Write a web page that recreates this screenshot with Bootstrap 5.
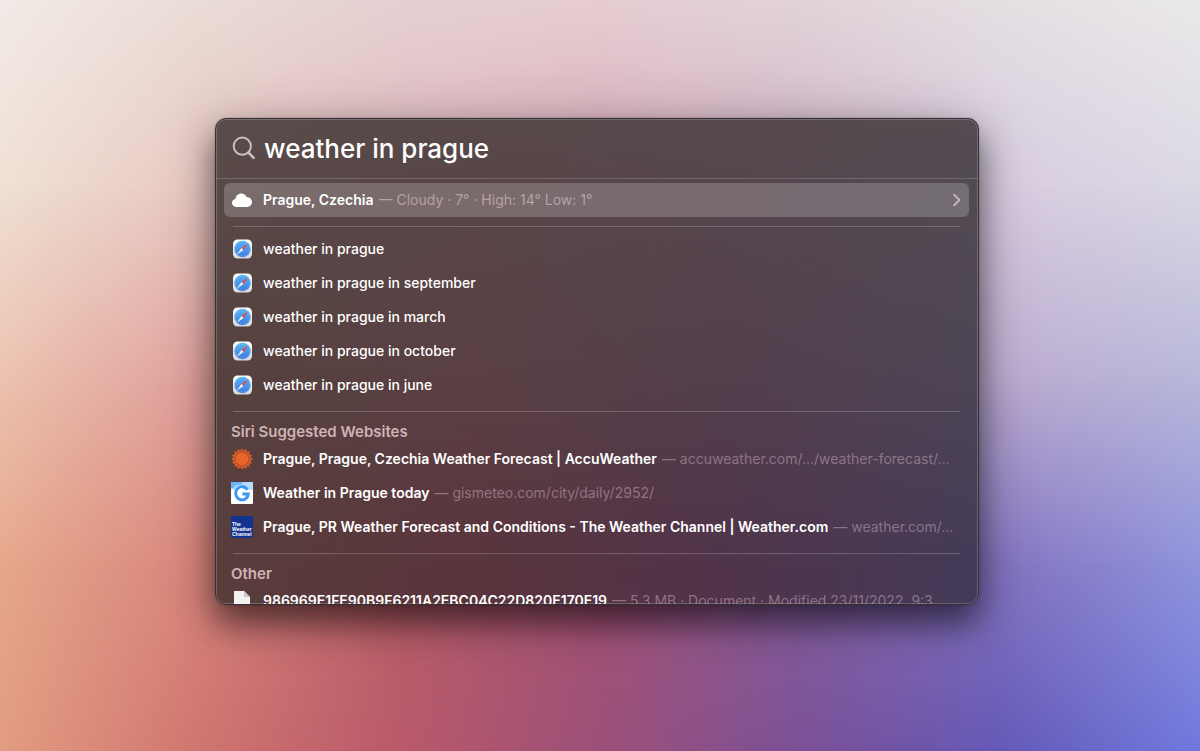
<!DOCTYPE html>
<html lang="en">
<head>
<meta charset="utf-8">
<meta name="viewport" content="width=device-width, initial-scale=1">
<title>Spotlight</title>
<link href="https://cdn.jsdelivr.net/npm/bootstrap@5.3.0/dist/css/bootstrap.min.css" rel="stylesheet">
<style>
  body { font-family: Inter, "Liberation Sans", sans-serif; font-size: 14px; line-height: 20px; color: #fff; }

  /* Colour mesh: each layer is one horizontal row of colours that fades in over the row above */
  .desktop { display: grid; grid-template-columns: 215fr 764fr 221fr; height: 100vh; padding: 118px 0 146px; position: relative; isolation: isolate; overflow: hidden;
    background: linear-gradient(90deg, #f3ebe8, #eadcd6, #e6d0d2, #e6cdd2, #e2d3d9, #e4dfe2, #ebe9ea); }
  .mesh { position: absolute; inset: 0; z-index: -1; }
  .mesh-a { background: linear-gradient(90deg, #efe0d4, #e8c8c2, #e0b9be, #d8acba, #cfb4c6, #d8cce0, #dbd8e4); -webkit-mask-image: linear-gradient(transparent, #000 25%); mask-image: linear-gradient(transparent, #000 25%); }
  .mesh-b { background: linear-gradient(90deg, #ecc3b0, #dfa09c, #c88088, #b08094, #a08cb0, #bcacd0, #b9b8da); -webkit-mask-image: linear-gradient(transparent 25%, #000 50%); mask-image: linear-gradient(transparent 25%, #000 50%); }
  .mesh-c { background: linear-gradient(90deg, #e6a88c, #d8857c, #b86068, #a45274, #86609e, #8474c0, #9094dc); -webkit-mask-image: linear-gradient(transparent 50%, #000 75%); mask-image: linear-gradient(transparent 50%, #000 75%); }
  .mesh-d { background: linear-gradient(90deg, #e29c80, #cf7570, #b9596a, #9c5078, #7b5096, #6459b6, #7078dd); -webkit-mask-image: linear-gradient(transparent 75%, #000); mask-image: linear-gradient(transparent 75%, #000); }

  .spotlight { grid-column: 2; position: relative; isolation: isolate; min-height: 0; border: 1px solid #343035; border-radius: 11px; overflow: hidden;
    background: linear-gradient(90deg, #5a4c4b, #584849, #57494e, #544c51);
    box-shadow: 0 0 2px rgba(0,0,0,.3), 0 18px 32px rgba(0,0,0,.52), 0 8px 60px rgba(0,0,0,.22); }
  .spotlight::after { content: ""; position: absolute; inset: 0; border: 1px solid rgba(255,255,255,.2); border-radius: 10px; pointer-events: none; }
  .tint-a { background: linear-gradient(90deg, #56423f, #5a4044, #533f4c, #4d4555); -webkit-mask-image: linear-gradient(transparent, #000 52%); mask-image: linear-gradient(transparent, #000 52%); }
  .tint-b { background: linear-gradient(90deg, #593d3b, #5a343c, #50334a, #433a59); -webkit-mask-image: linear-gradient(transparent 52%, #000 95%); mask-image: linear-gradient(transparent 52%, #000 95%); }

  .search-bar { height: 60px; padding: 0 16px; border-bottom: 1px solid rgba(255,255,255,.17); }
  .search-field, .search-field:focus { font-size: 26px; line-height: 36px; font-weight: 500; color: #fff; background: none; border: 0; padding: 0; box-shadow: none; outline: 0; }
  .results { padding: 4px 9px 0 8px; }
  .hit { display: flex; align-items: center; gap: 10px; height: 34px; padding: 0 8px 0 7px; border: 0; border-radius: 6px; background: none; color: #fff; }
  .hit:hover { color: #fff; background: rgba(255,255,255,.08); }
  .hit.current { background: rgba(255,255,255,.2); }
  .hit svg { flex: none; }
  .hit-name { font-weight: 600; white-space: nowrap; flex: none; }
  .hit-query { font-weight: 500; white-space: nowrap; }
  .hit-note { color: rgba(232,200,220,.42); min-width: 0; white-space: nowrap; overflow: hidden; margin-left: -5px; }
  .current .hit-note { color: rgba(235,210,220,.55); }
  .rule { height: 1px; margin: 9px 9px 5px; border: 0; opacity: 1; background: rgba(255,255,255,.2); }
  .group-title { font-size: 15px; line-height: 20px; font-weight: 600; color: #cdb3b6; margin: 0; padding: 5px 7px 0; height: 25px; }
</style>
</head>
<body>
<svg class="position-absolute" width="0" height="0" aria-hidden="true">
  <defs>
    <linearGradient id="tile" x1="0" y1="0" x2="0" y2="1"><stop stop-color="#fff"/><stop offset="1" stop-color="#d9d8da"/></linearGradient>
    <linearGradient id="dial" x1="0" y1="0" x2="0" y2="1"><stop stop-color="#56b4f2"/><stop offset="1" stop-color="#3d7be0"/></linearGradient>
  </defs>
  <symbol id="compass" viewBox="0 0 22 22">
    <rect x="2" y="1.500" width="19" height="19" rx="4.500" fill="url(#tile)"/>
    <circle cx="11.500" cy="11" r="8.200" fill="url(#dial)"/>
    <circle cx="11.500" cy="11" r="7.100" fill="none" stroke="#cfe6fb" stroke-width=".9" stroke-dasharray=".5 1.360" opacity=".7"/>
    <path d="M17.300 5.200 12.400 11.900 10.600 10.100z" fill="#e9473f"/>
    <path d="M5.700 16.800 10.600 10.100 12.400 11.900z" fill="#f4f4f6"/>
  </symbol>
</svg>

<main class="desktop">
  <div class="mesh mesh-a"></div><div class="mesh mesh-b"></div><div class="mesh mesh-c"></div><div class="mesh mesh-d"></div>

  <section class="spotlight d-flex flex-column" aria-label="Spotlight search">
    <div class="mesh tint-a"></div><div class="mesh tint-b"></div>

    <form class="search-bar d-flex align-items-center flex-shrink-0 gap-2" role="search">
      <label for="query" class="d-flex">
        <svg width="24" height="26" viewBox="0 0 24 26" fill="none" stroke="#cdbfc0" role="img" aria-label="Search">
          <circle cx="10.3" cy="10.2" r="8.6" stroke-width="2"/><path d="m16.600 16.600 5 5.200" stroke-width="2.6" stroke-linecap="round"/>
        </svg>
      </label>
      <input id="query" class="form-control search-field" type="text" value="weather in prague" autocomplete="off" spellcheck="false">
    </form>

    <div class="results flex-grow-1 overflow-hidden">
      <div class="list-group">
        <a href="#" class="list-group-item hit current">
          <svg width="22" height="22" viewBox="0 0 22 22"><path d="M5.400 18C2.800 18 1 16.300 1 14.100c0-2 1.400-3.700 3.400-4C4.900 6.600 7.200 4.400 10.200 4.400c2.500 0 4.600 1.400 5.400 3.700 3.200.1 5.400 2.100 5.400 5 0 2.800-2 4.900-5 4.900z" fill="#fff"/></svg>
          <span class="hit-name">Prague, Czechia</span>
          <span class="hit-note flex-grow-1">— Cloudy · 7° · High: 14° Low: 1°</span>
          <svg width="8" height="14" viewBox="0 0 8 14" fill="none" stroke="#c3b4bd" stroke-width="2" stroke-linecap="round" stroke-linejoin="round"><path d="m1.200 1.800 5.300 5.200-5.300 5.200"/></svg>
        </a>
      </div>
      <hr class="rule">
      <div class="list-group">
        <a href="#" class="list-group-item hit"><svg width="22" height="22"><use href="#compass"/></svg><span class="hit-query">weather in prague</span></a>
        <a href="#" class="list-group-item hit"><svg width="22" height="22"><use href="#compass"/></svg><span class="hit-query">weather in prague in september</span></a>
        <a href="#" class="list-group-item hit"><svg width="22" height="22"><use href="#compass"/></svg><span class="hit-query">weather in prague in march</span></a>
        <a href="#" class="list-group-item hit"><svg width="22" height="22"><use href="#compass"/></svg><span class="hit-query">weather in prague in october</span></a>
        <a href="#" class="list-group-item hit"><svg width="22" height="22"><use href="#compass"/></svg><span class="hit-query">weather in prague in june</span></a>
      </div>
      <hr class="rule">
      <h2 class="group-title">Siri Suggested Websites</h2>
      <div class="list-group">
        <a href="#" class="list-group-item hit">
          <svg width="22" height="22" viewBox="0 0 22 22"><path fill="#e0602c" d="M11 .2l1.700 2.500 2.400-1.700.6 3 3-.7-.7 3 3 .6-1.700 2.400L21.800 11l-2.500 1.700 1.700 2.400-3 .6.7 3-3-.7-.6 3-2.400-1.700L11 21.800l-1.700-2.500L6.900 21l-.6-3-3 .7.7-3-3-.6 1.700-2.400L.2 11l2.500-1.700L1 6.900l3-.6-.7-3 3 .7.6-3 2.400 1.700z"/><circle cx="11" cy="11" r="7.200" fill="#e8642b" stroke="#8f4432" stroke-width=".9"/></svg>
          <span class="hit-name">Prague, Prague, Czechia Weather Forecast | AccuWeather</span>
          <span class="hit-note">— accuweather.com/…/weather-forecast/…</span>
        </a>
        <a href="#" class="list-group-item hit">
          <svg width="22" height="22" viewBox="0 0 22 22"><rect width="22" height="22" rx="1" fill="#fbfdff"/><path d="M0 1q0-1 1-1h20q1 0 1 1v7q-3-1-5 0-3-4-7-3-3 0-5 3-3-1-5 0z" fill="#b4dafc"/><path d="M0 1q0-1 1-1h11q-1 3-5 3-3 0-4 3H0z" fill="#6db7f8"/><path d="M16.300 7.700A6.300 6.600 0 1 0 17.300 12h-5.800" fill="none" stroke="#3c98f3" stroke-width="2.800"/></svg>
          <span class="hit-name">Weather in Prague today</span>
          <span class="hit-note">— gismeteo.com/city/daily/2952/</span>
        </a>
        <a href="#" class="list-group-item hit">
          <svg width="22" height="22" viewBox="0 0 22 22" fill="#fff" font-family="Liberation Sans, sans-serif" font-weight="700" font-size="5"><rect width="22" height="22" rx="1" fill="#14328f"/><text x="1" y="10">The</text><text x="1" y="15">Weather</text><text x="1" y="20">Channel</text></svg>
          <span class="hit-name">Prague, PR Weather Forecast and Conditions - The Weather Channel | Weather.com</span>
          <span class="hit-note">— weather.com/…</span>
        </a>
      </div>
      <hr class="rule">
      <h2 class="group-title">Other</h2>
      <div class="list-group">
        <a href="#" class="list-group-item hit">
          <svg width="22" height="22" viewBox="0 0 22 22"><path d="M3 1h10l6 6v15H3z" fill="#f3f1f1"/><path d="M13 1v6h6z" fill="#c9c5c6"/></svg>
          <span class="hit-name">986969E1FE90B9F6211A2EBC04C22D820E170E19</span>
          <span class="hit-note">— 5.3 MB · Document · Modified 23/11/2022, 9:3</span>
        </a>
      </div>
    </div>
  </section>
</main>
<script src="https://cdn.jsdelivr.net/npm/bootstrap@5.3.0/dist/js/bootstrap.bundle.min.js"></script>
</body>
</html>
